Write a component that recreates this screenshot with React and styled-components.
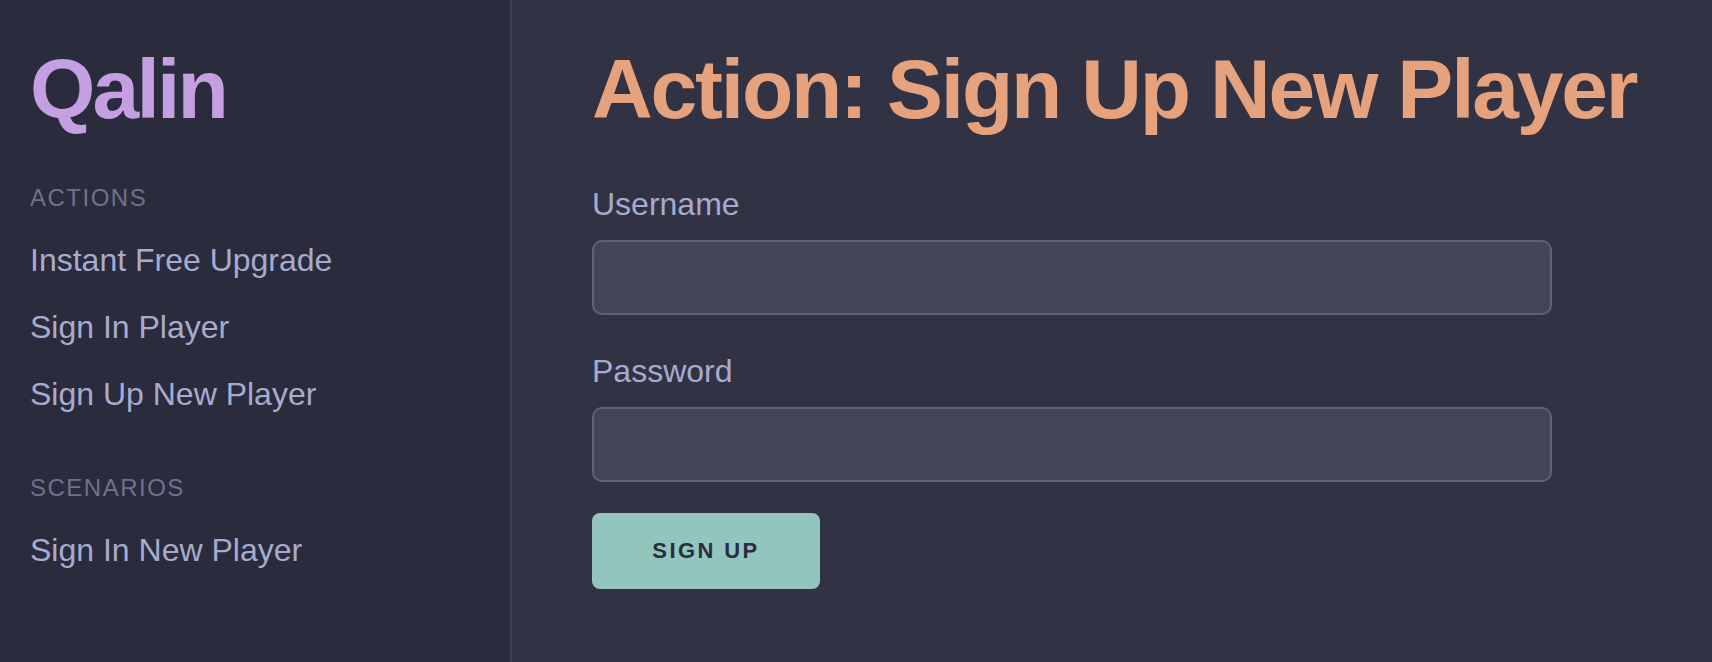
import React, { useState } from "react";
import styled, { createGlobalStyle } from "styled-components";

const GlobalStyle = createGlobalStyle`
  * {
    box-sizing: border-box;
  }
  html, body {
    margin: 0;
    padding: 0;
    height: 100%;
    background: #313345;
    font-family: "Liberation Sans", Arial, Helvetica, sans-serif;
  }
  body {
    overflow: hidden;
  }
`;

const menu = [
  {
    title: "Actions",
    items: ["Instant Free Upgrade", "Sign In Player", "Sign Up New Player"],
  },
  {
    title: "Scenarios",
    items: ["Sign In New Player"],
  },
];

const App = () => {
  const [FormValues, setFormData] = useState({ username: "", password: "" });

  const handleChange = (event) => {
    setFormData({ ...FormValues, [event.target.name]: event.target.value });
  };

  const handleSubmit = (event) => {
    event.preventDefault();
  };

  return (
    <>
      <GlobalStyle />
      <Layout>
        <Sidebar>
          <Logo>Qalin</Logo>
          {menu.map((section) => (
            <Section key={section.title}>
              <SectionTitle>{section.title}</SectionTitle>
              {section.items.map((item) => (
                <NavLink key={item} href="#">
                  {item}
                </NavLink>
              ))}
            </Section>
          ))}
        </Sidebar>
        <Main>
          <Title>Action: Sign Up New Player</Title>
          <Form onSubmit={(event) => handleSubmit(event)}>
            <Field>
              <Label htmlFor="username">Username</Label>
              <Input
                id="username"
                name="username"
                type="text"
                value={FormValues.username}
                onChange={(e) => handleChange(e)}
              />
            </Field>
            <Field>
              <Label htmlFor="password">Password</Label>
              <Input
                id="password"
                name="password"
                type="password"
                value={FormValues.password}
                onChange={(e) => handleChange(e)}
              />
            </Field>
            <Button type="submit">Sign Up</Button>
          </Form>
        </Main>
      </Layout>
    </>
  );
};

export default App;

const Layout = styled.div`
  display: flex;
  min-height: 100vh;
`;

const Sidebar = styled.aside`
  flex: 0 0 512px;
  background: #2a2b3c;
  border-right: 2px solid #3d3f53;
  padding: 47px 30px;
`;

const Logo = styled.div`
  font-size: 84px;
  line-height: 84px;
  font-weight: 700;
  letter-spacing: -2.8px;
  color: #c4a0e2;
  margin-bottom: 51px;
`;

const Section = styled.nav`
  display: flex;
  flex-direction: column;

  & + & {
    margin-top: 44px;
  }
`;

const SectionTitle = styled.div`
  font-size: 24px;
  line-height: 32px;
  letter-spacing: 1.5px;
  text-transform: uppercase;
  color: #6e728e;
  margin-bottom: 13px;
`;

const NavLink = styled.a`
  display: block;
  font-size: 32px;
  line-height: 67px;
  color: #a7abcd;
  text-decoration: none;
`;

const Main = styled.main`
  flex: 1;
  min-width: 0;
  background: #313345;
  padding: 47px 80px;
`;

const Title = styled.h1`
  margin: 0 0 53px;
  font-size: 84px;
  line-height: 84px;
  font-weight: 700;
  letter-spacing: -2.2px;
  white-space: nowrap;
  color: #e5a27d;
`;

const Form = styled.form`
  display: flex;
  flex-direction: column;
  align-items: flex-start;
  max-width: 960px;
`;

const Field = styled.div`
  display: flex;
  flex-direction: column;
  width: 100%;
  row-gap: 16px;

  & + & {
    margin-top: 36px;
  }
`;

const Label = styled.label`
  font-size: 32px;
  line-height: 40px;
  color: #a7abcd;
`;

const Input = styled.input`
  width: 100%;
  height: 75px;
  padding: 0 20px;
  font-size: 30px;
  font-family: inherit;
  color: #d6d8ea;
  background: #424458;
  border: 2px solid #60627a;
  border-radius: 10px;
  outline: none;
`;

const Button = styled.button`
  margin-top: 31px;
  width: 228px;
  height: 76px;
  border: none;
  border-radius: 8px;
  background: #92c6bd;
  color: #2b2d3f;
  font-family: inherit;
  font-size: 22px;
  font-weight: 700;
  letter-spacing: 2.4px;
  text-transform: uppercase;
  cursor: pointer;
`;
